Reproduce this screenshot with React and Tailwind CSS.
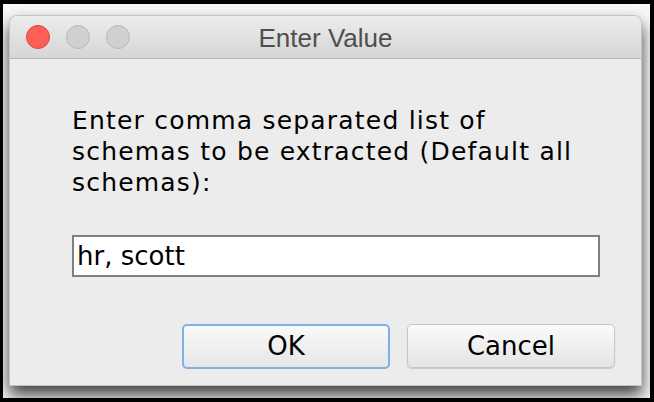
import React, { useState } from "react";

function TrafficLight({ color }) {
  return (
    <span
      className={`block h-6 w-6 rounded-full border ${
        color === "red" ? "bg-[#fc5f57] border-[#e0443e]" : "bg-[#d0d0d0] border-[#b9b9b9]"
      }`}
    />
  );
}

export default function App() {
  const [value, setValue] = useState("hr, scott");

  return (
    <div className="h-[402px] w-[654px] overflow-hidden border-l-[3px] border-t-4 border-r-4 border-b-4 border-black bg-[#f7f7f7] pl-[6px] pr-2 pt-[11px] pb-3">
      <div className="flex h-full flex-col overflow-hidden rounded-t-[8px] border border-[#c4c4c4] bg-[#ececec] shadow-[0_9px_16px_rgba(0,0,0,0.75)]">
        <header className="relative flex h-[43px] shrink-0 items-center border-b border-[#b8b8b8] bg-gradient-to-b from-[#ececec] to-[#d6d6d6] pl-[16px]">
          <div className="flex gap-4">
            <TrafficLight color="red" />
            <TrafficLight color="grey" />
            <TrafficLight color="grey" />
          </div>
          <h1 className="absolute inset-x-0 top-0 flex h-full items-center justify-center pt-[3px] font-['Liberation_Sans',sans-serif] text-[26px] text-[#4f4f4f]">
            Enter Value
          </h1>
        </header>

        <main className="flex flex-1 flex-col pl-[62px] pr-[26px] pt-[46px] font-['DejaVu_Sans',sans-serif] text-[#000]">
          <p className="text-[25px] leading-[31px] tracking-[1.2px] whitespace-nowrap">
            Enter comma separated list of
            <br />
            schemas to be extracted (Default all
            <br />
            schemas):
          </p>
          <input
            type="text"
            value={value}
            onChange={(e) => setValue(e.target.value)}
            className="mt-[37px] h-[42px] w-[528px] border-2 border-[#7f7f7f] bg-white px-[3px] text-[26px] text-black outline-none"
          />
          <div className="mt-[47px] flex justify-end gap-[17px]">
            <button className="h-[45px] w-[208px] rounded-[5px] border-2 border-[#7fb1e6] bg-gradient-to-b from-[#fafafa] to-[#e6e6e6] text-[26px] text-black">
              OK
            </button>
            <button className="h-[44px] w-[208px] rounded-[5px] border border-[#c6c6c6] bg-gradient-to-b from-[#fbfbfb] to-[#e4e4e4] text-[26px] text-black shadow-[0_1px_1px_rgba(0,0,0,0.15)]">
              Cancel
            </button>
          </div>
        </main>
      </div>
    </div>
  );
}
